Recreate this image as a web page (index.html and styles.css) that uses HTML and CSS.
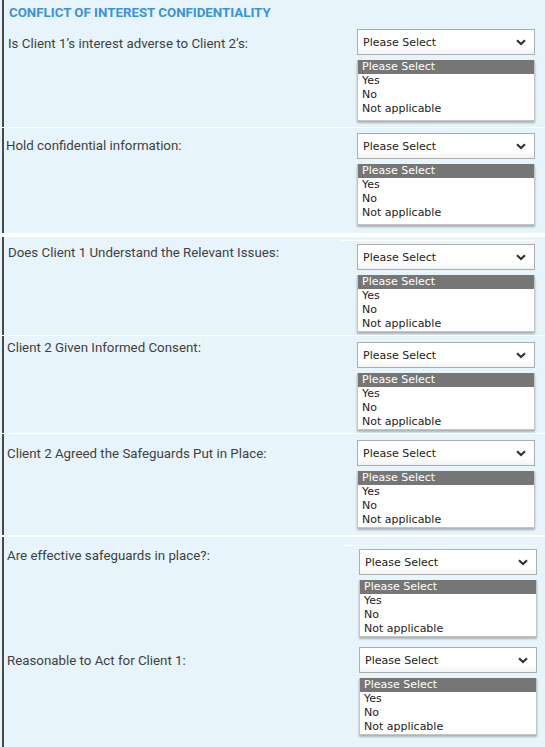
FILE: index.html
```html
<!DOCTYPE html>
<html>
<head>
<meta charset="utf-8">
<link rel="stylesheet" href="styles.css">
</head>
<body>
<div class="form">
  <section class="sec sec-1">
    <h2 class="title">CONFLICT OF INTEREST CONFIDENTIALITY</h2>
    <div class="row">
      <div class="label lbl-1">Is Client 1’s interest adverse to Client 2’s:</div>
      <div class="field">
        <div class="select"><span>Please Select</span><svg class="chev" width="10" height="7" viewBox="0 0 10 7"><path d="M1 1.2 L5 5 L9 1.2" fill="none" stroke="#333" stroke-width="2.2"/></svg></div>
        <div class="list tall"><div class="opt sel">Please Select</div><div class="opt">Yes</div><div class="opt">No</div><div class="opt">Not applicable</div></div>
      </div>
    </div>
  </section>
  <div class="sep thin"></div>
  <section class="sec sec-2">
    <div class="row">
      <div class="label lbl-2">Hold confidential information:</div>
      <div class="field">
        <div class="select"><span>Please Select</span><svg class="chev" width="10" height="7" viewBox="0 0 10 7"><path d="M1 1.2 L5 5 L9 1.2" fill="none" stroke="#333" stroke-width="2.2"/></svg></div>
        <div class="list tall"><div class="opt sel">Please Select</div><div class="opt">Yes</div><div class="opt">No</div><div class="opt">Not applicable</div></div>
      </div>
    </div>
  </section>
  <div class="sep gap"></div>
  <section class="sec sec-3">
    <div class="row">
      <div class="label lbl-3">Does Client 1 Understand the Relevant Issues:</div>
      <div class="field lined">
        <div class="select"><span>Please Select</span><svg class="chev" width="10" height="7" viewBox="0 0 10 7"><path d="M1 1.2 L5 5 L9 1.2" fill="none" stroke="#333" stroke-width="2.2"/></svg></div>
        <div class="list"><div class="opt sel">Please Select</div><div class="opt">Yes</div><div class="opt">No</div><div class="opt">Not applicable</div></div>
      </div>
    </div>
  </section>
  <div class="sep thin"></div>
  <section class="sec sec-4">
    <div class="row">
      <div class="label lbl-4">Client 2 Given Informed Consent:</div>
      <div class="field">
        <div class="select"><span>Please Select</span><svg class="chev" width="10" height="7" viewBox="0 0 10 7"><path d="M1 1.2 L5 5 L9 1.2" fill="none" stroke="#333" stroke-width="2.2"/></svg></div>
        <div class="list"><div class="opt sel">Please Select</div><div class="opt">Yes</div><div class="opt">No</div><div class="opt">Not applicable</div></div>
      </div>
    </div>
  </section>
  <div class="sep thin"></div>
  <section class="sec sec-5">
    <div class="row">
      <div class="label lbl-5">Client 2 Agreed the Safeguards Put in Place:</div>
      <div class="field">
        <div class="select"><span>Please Select</span><svg class="chev" width="10" height="7" viewBox="0 0 10 7"><path d="M1 1.2 L5 5 L9 1.2" fill="none" stroke="#333" stroke-width="2.2"/></svg></div>
        <div class="list"><div class="opt sel">Please Select</div><div class="opt">Yes</div><div class="opt">No</div><div class="opt">Not applicable</div></div>
      </div>
    </div>
  </section>
  <div class="sep thin2"></div>
  <section class="sec sec-6">
    <div class="row">
      <div class="label lbl-6">Are effective safeguards in place?:</div>
      <div class="field lined shifted">
        <div class="select"><span>Please Select</span><svg class="chev" width="10" height="7" viewBox="0 0 10 7"><path d="M1 1.2 L5 5 L9 1.2" fill="none" stroke="#333" stroke-width="2.2"/></svg></div>
        <div class="list"><div class="opt sel">Please Select</div><div class="opt">Yes</div><div class="opt">No</div><div class="opt">Not applicable</div></div>
      </div>
    </div>
    <div class="row">
      <div class="label lbl-7">Reasonable to Act for Client 1:</div>
      <div class="field shifted">
        <div class="select"><span>Please Select</span><svg class="chev" width="10" height="7" viewBox="0 0 10 7"><path d="M1 1.2 L5 5 L9 1.2" fill="none" stroke="#333" stroke-width="2.2"/></svg></div>
        <div class="list"><div class="opt sel">Please Select</div><div class="opt">Yes</div><div class="opt">No</div><div class="opt">Not applicable</div></div>
      </div>
    </div>
  </section>
</div>
</body>
</html>
```

FILE: styles.css
```css
html, body {
  margin: 0;
  padding: 0;
  background: #e8f4fb;
}
body {
  width: 545px;
  height: 747px;
  overflow: hidden;
  font-family: Roboto, "Liberation Sans", sans-serif;
}
.form {
  display: flex;
  flex-direction: column;
  min-height: 747px;
}
.sec {
  background: #e8f4fb;
  border-left: 2px solid #4a4a4a;
  margin-left: 2px;
}
.sec-6 { flex: 1; }
.sep { background: #ffffff; }
.sep.thin { height: 1px; }
.sep.thin2 { height: 2px; }
.sep.gap { height: 4px; }

.title {
  margin: 0;
  padding: 5px 0 0 5px;
  height: 19px;
  box-sizing: border-box;
  font-size: 13.3px;
  font-weight: 700;
  color: #3c91d8;
  line-height: 16px;
  letter-spacing: 0;
}
.row {
  display: flex;
  align-items: flex-start;
}
.label {
  flex: 1;
  font-size: 13.3px;
  color: #3f3f3f;
  line-height: 16px;
  padding-left: 4px;
}
.field {
  width: 178px;
  margin-right: 10px;
  display: flex;
  flex-direction: column;
  gap: 5px;
}
.field.shifted { margin-right: 8px; }
.field.lined {
  border-top: 1px solid #ffffff;
  margin-left: -16px;
  padding-left: 16px;
  width: 178px;
}
.field.lined .select { margin-top: 3px; }

.select {
  height: 26px;
  box-sizing: border-box;
  background: linear-gradient(#ffffff 70%, #f3f3f3);
  border: 1px solid #adadad;
  display: flex;
  align-items: center;
  justify-content: space-between;
  padding: 0 8px 0 5px;
  font-family: "DejaVu Sans", Verdana, sans-serif;
  font-size: 11px;
  color: #222;
}
.chev { display: block; }

.list {
  background: #fff;
  border: 1px solid #c4c4c4;
  border-top: none;
  box-shadow: 0 2px 2px rgba(0, 0, 0, 0.28);
  height: 57px;
  box-sizing: border-box;
  font-family: "DejaVu Sans", Verdana, sans-serif;
  font-size: 11px;
  color: #222;
}
.list.tall { height: 61px; }
.opt {
  height: 14px;
  line-height: 14px;
  padding-left: 4px;
  white-space: nowrap;
}
.opt.sel {
  background: #767676;
  color: #ffffff;
}

/* per-section vertical placement */
.sec-1 .row { padding-top: 10px; padding-bottom: 6px; }
.lbl-1 { padding-top: 7px; }
.sec-2 .row { padding-top: 5px; padding-bottom: 8px; }
.lbl-2 { padding-top: 5px; padding-left: 2px; }
.sec-3 .row { padding-top: 3px; padding-bottom: 3px; }
.lbl-3 { padding-top: 5px; }
.sec-4 .row { padding-top: 6px; padding-bottom: 3px; }
.lbl-4 { margin-top: -2px; padding-left: 3px; }
.sec-5 .row { padding-top: 6px; padding-bottom: 7px; }
.lbl-5 { padding-top: 6px; padding-left: 3px; }
.sec-6 .row:first-child { padding-top: 8px; padding-bottom: 4px; }
.lbl-6 { padding-top: 3px; padding-left: 3px; }
.sec-6 .row:last-child { padding-top: 6px; padding-bottom: 6px; }
.lbl-7 { padding-top: 6px; padding-left: 3px; }
```
